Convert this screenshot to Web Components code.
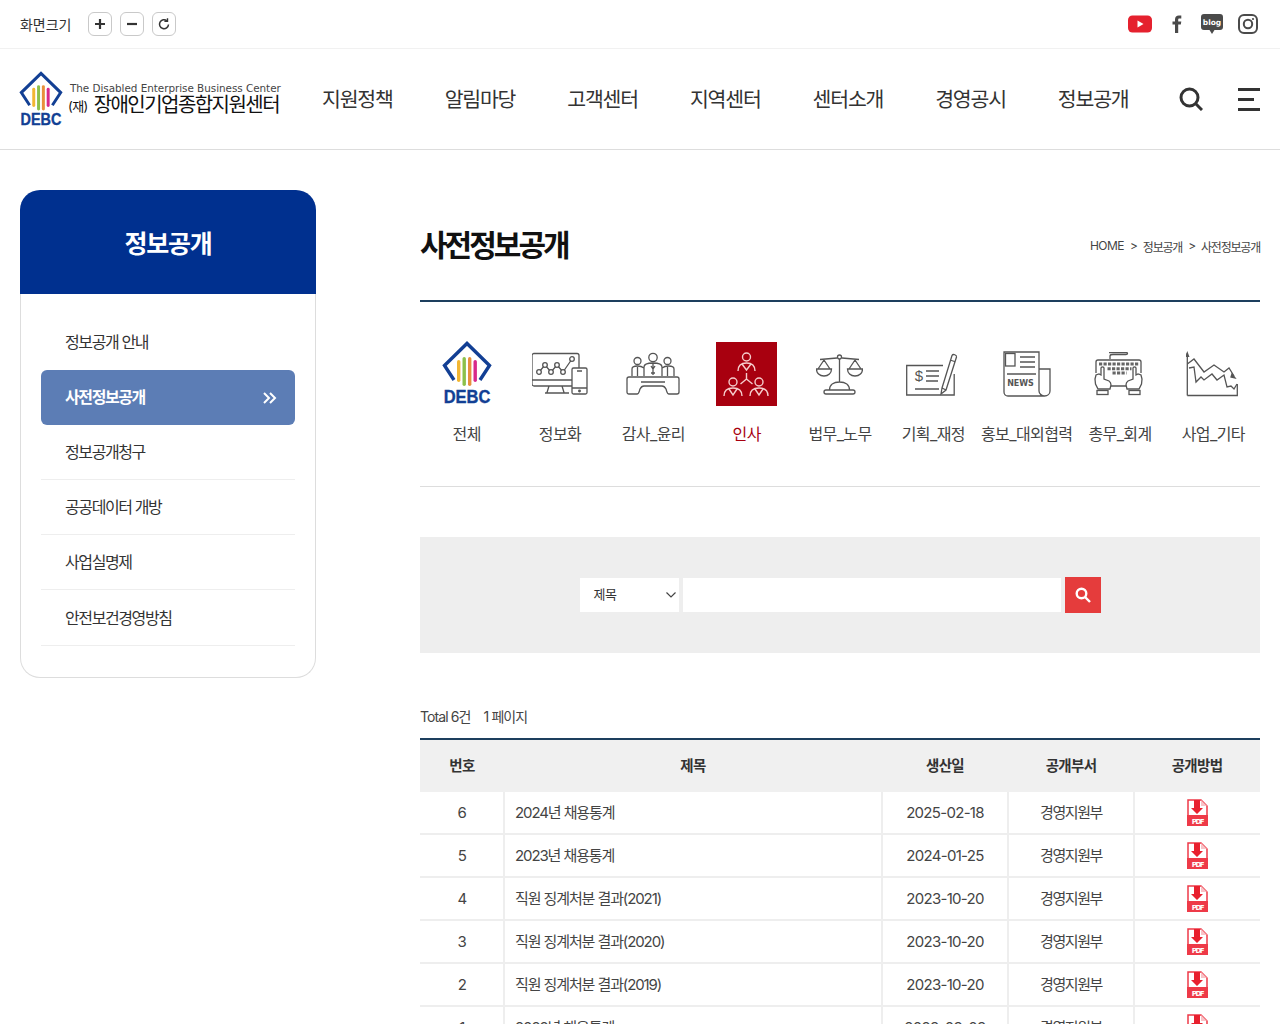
<!DOCTYPE html>
<html lang="ko"><head><meta charset="utf-8"><title>사전정보공개</title>
<style>
html,body{margin:0;padding:0;height:1024px;overflow:hidden;background:#fff}
body{font-family:Inter,"Noto Sans CJK KR","Noto Sans",sans-serif;color:#333}
</style></head><body>
<site-topbar></site-topbar>
<site-header></site-header>
<page-layout>
  <side-nav slot="side"></side-nav>
  <page-title></page-title>
  <cat-tabs></cat-tabs>
  <search-box></search-box>
  <data-board></data-board>
</page-layout>
<script>
const FONT='Inter,"Noto Sans CJK KR","Noto Sans",sans-serif';
const debc=(w)=>`<svg width="${w}" viewBox="0 0 48 64" style="display:block;overflow:visible"><path d="M11 38 1.500 23.500 24 1.500 46.500 23.500 37 38" fill="none" stroke="#123f94" stroke-width="3.400"/><rect x="14" y="18" width="3.400" height="22" rx="1.700" fill="#f2b632"/><rect x="19.500" y="15" width="3.400" height="29" rx="1.700" fill="#8cc04a"/><rect x="25" y="15" width="3.400" height="29" rx="1.700" fill="#e8903c"/><rect x="30.500" y="18" width="3.400" height="22" rx="1.700" fill="#d8298a"/><text transform="translate(24 61) scale(1 1.120)" text-anchor="middle" font-family="Liberation Sans,sans-serif" font-weight="700" font-size="16.500" fill="#123f94" stroke="#123f94" stroke-width=".35">DEBC</text></svg>`;
function def(name,css,html){
  customElements.define(name,class extends HTMLElement{
    constructor(){super();const r=this.attachShadow({mode:'open'});r.innerHTML=`<style>${css}</style>${html}`;}
  });
}
const zoomBtn=(p)=>`<span class="zb"><svg width="14" height="14" viewBox="0 0 14 14" fill="none" stroke="#333" stroke-width="2.200">${p}</svg></span>`;
def('site-topbar',`
:host{display:flex;align-items:center;height:48px;border-bottom:1px solid #f1f1f1;padding:0 20px;font-family:${FONT}}
.l{font-size:14px;color:#333;letter-spacing:-.05px;margin-right:17px}
.zb{width:22px;height:22px;border:1px solid #c9c9c9;border-radius:6px;display:flex;align-items:center;justify-content:center;margin-right:8px}
.sp{flex:1}.s{display:flex;align-items:center}
.s svg{display:block}
`,`<span class="l">화면크기</span>
${zoomBtn('<path d="M7 2v10M2 7h10"/>')}${zoomBtn('<path d="M2 7h10"/>')}
<span class="zb"><svg width="14" height="14" viewBox="0 0 14 14" fill="none" stroke="#333" stroke-width="1.500"><path d="M11.500 7.500a4.500 4.500 0 1 1-1.600-3.700"/><path d="M10.500 1.200v3.100H7.400" stroke-width="1.400"/></svg></span>
<span class="sp"></span>
<span class="s">
<svg width="24" height="18" viewBox="0 0 24 18" style="margin-right:20px"><rect width="24" height="17" y=".5" rx="4.500" fill="#e5212e"/><path d="M9.500 5.500v7l6-3.500z" fill="#fff"/></svg>
<svg width="10" height="18" viewBox="0 0 10 18" style="margin-right:19px"><path d="M3 18V9.500H.5V6.500H3V4.500C3 1.800 4.500.5 6.800.5H9.300V3.500H7.500C6.500 3.500 6.200 4 6.200 4.800V6.500H9.300L8.800 9.500H6.200V18z" fill="#4a4a4a"/></svg>
<svg width="22" height="20" viewBox="0 0 22 20" style="margin-right:15px"><path d="M3 0h16a3 3 0 0 1 3 3v10a3 3 0 0 1-3 3h-5.500L11 20l-2.500-4H3a3 3 0 0 1-3-3V3a3 3 0 0 1 3-3z" fill="#4a4a4a"/><text x="11" y="10.500" text-anchor="middle" font-family="DejaVu Sans,sans-serif" font-size="7.500" font-weight="700" fill="#fff">blog</text></svg>
<svg width="20" height="20" viewBox="0 0 20 20" fill="none" stroke="#4a4a4a" stroke-width="2" style="margin-right:2px"><rect x="1" y="1" width="18" height="18" rx="5"/><circle cx="10" cy="10" r="4.200"/><circle cx="15" cy="5" r="1.100" fill="#4a4a4a" stroke="none"/></svg>
</span>`);
def('site-header',`
:host{display:flex;align-items:center;height:100px;border-bottom:1px solid #ddd;padding:0 0 0 20px;font-family:${FONT}}
.logo{width:262px;position:relative;height:60px;flex:none}
.mark{position:absolute;left:0;top:3px}
.t{position:absolute;left:48px;top:13px;white-space:nowrap}
.t1{font:400 10.400px/13px "DejaVu Sans",sans-serif;color:#444;margin-left:2px;letter-spacing:-.03px}
.t2{font-size:20px;line-height:22px;color:#111;letter-spacing:-1.550px;margin-top:-1px}
.t2 small{font-size:13px;letter-spacing:-.6px;position:relative;top:-1px;margin-right:6px}
nav{display:flex;margin-left:40px;gap:52px;padding-bottom:2px}
nav a{font-size:20.500px;color:#333;letter-spacing:-1.200px;white-space:nowrap}
.sr{margin-left:51px;display:block;flex:none}.mn{margin-left:35px;width:22px;height:23px;display:flex;flex-direction:column;justify-content:space-between;flex:none}
.mn i{display:block;height:3px;background:#333}.mn i:nth-child(2){width:16px}
`,`<div class="logo"><div class="mark">${debc(42)}</div>
<div class="t"><div class="t1">The Disabled Enterprise Business Center</div><div class="t2"><small>(재)</small>장애인기업종합지원센터</div></div></div>
<nav><a>지원정책</a><a>알림마당</a><a>고객센터</a><a>지역센터</a><a>센터소개</a><a>경영공시</a><a>정보공개</a></nav>
<svg class="sr" width="24" height="24" viewBox="0 0 24 24" fill="none" stroke="#333" stroke-width="3"><circle cx="10.500" cy="10.500" r="8.500"/><path d="M16.500 16.500 23 23"/></svg>
<div class="mn"><i></i><i></i><i></i></div>`);
def('page-layout',`
:host{display:flex;padding:40px 20px 0;font-family:${FONT}}
.a{width:296px;flex:none;margin-right:104px}.b{flex:1;min-width:0}
`,`<div class="a"><slot name="side"></slot></div><div class="b"><slot></slot></div>`);
def('side-nav',`
:host{display:block;font-family:${FONT}}
h2{margin:0;height:104px;background:#00308f;border-radius:20px 20px 0 0;color:#fff;font-size:25px;font-weight:700;letter-spacing:-1.200px;display:flex;align-items:center;justify-content:center;padding-bottom:1px;box-sizing:border-box}
ul{list-style:none;margin:0;padding:21px 20px 0;border:1px solid #ddd;border-top:0;border-radius:0 0 20px 20px;height:384px;box-sizing:border-box}
li{height:55px;border-bottom:1.500px solid #eee;display:flex;align-items:center;justify-content:space-between;padding:0 18px 2px 24px;font-size:16px;letter-spacing:-1.400px;color:#333;box-sizing:border-box}
li:last-child{height:56px}
li.n{border-bottom-color:transparent}
li.on{background:#5c7db5;color:#fff;font-weight:700;border-radius:6px;border:0;padding-bottom:3px}
li.on svg{margin-top:3px}
`,`<h2>정보공개</h2><ul>
<li class="n">정보공개 안내</li>
<li class="on">사전정보공개<svg width="14" height="12" viewBox="0 0 14 12" fill="none" stroke="#fff" stroke-width="2"><path d="M1 1l5 5-5 5M7 1l5 5-5 5"/></svg></li>
<li>정보공개청구</li><li>공공데이터 개방</li><li>사업실명제</li><li>안전보건경영방침</li></ul>`);
def('page-title',`
:host{display:flex;justify-content:space-between;align-items:center;height:110px;border-bottom:2px solid #1d3f5e;font-family:${FONT}}
h1{margin:0;font-size:30px;font-weight:700;letter-spacing:-3px;color:#111;position:relative;top:-2px}
.c{font-size:12px;color:#444;letter-spacing:-1.200px;display:flex;gap:6px;position:relative;top:1px}
.c b{font-weight:400;letter-spacing:-.5px}
`,`<h1>사전정보공개</h1><div class="c"><b>HOME</b><span>&gt;</span><span>정보공개</span><span>&gt;</span><span>사전정보공개</span></div>`);
const S='fill="none" stroke="#555" stroke-width="1.300"';
const dot=(x,y)=>`<circle cx="${x}" cy="${y}" r="2.300" fill="#fff"/>`;
const icons={
info:`<svg width="56" height="44" viewBox="0 0 56 44" ${S} style="display:block"><path d="M40 34H2a2 2 0 0 1-2-2V3.500a2 2 0 0 1 2-2h43a2 2 0 0 1 2 2V16M0 28h40M17 34l-2 6.500M30 34l2 6.500M13 41h24"/><rect x="40" y="16" width="15" height="26" rx="1.500"/><path d="M45 19h5M40 36h15"/><circle cx="47.500" cy="39" r=".8" fill="#555"/><path d="M7 20l6-7 6 7 6-7 6 7 9-13"/>${dot(7,20)+dot(13,13)+dot(19,20)+dot(25,13)+dot(31,20)+dot(40,7)}</svg>`,
audit:`<svg width="54" height="44" viewBox="0 0 54 44" ${S} style="display:block"><circle cx="11.500" cy="9" r="3.500"/><circle cx="27" cy="5.500" r="4.200"/><circle cx="41.500" cy="9" r="3.500"/><path d="M6 24v-7c0-2 2-3 5.500-3s4.500.5 6.500 2M48 24v-7c0-2-2-3-5.500-3s-4.500.5-6.500 2M18 24v-9c0-3 4-4 9-4s9 1 9 4v9M11.500 15v9M41.500 15v9M27 11v12M25 14l2 3 2-3M25 21h4"/><path d="M3 25h48c1 0 2 1 2 2v13c0 1-.5 2-2 2h-8c-2 0-2-2-3-5-1-2-2-3-4-3H18c-2 0-3 1-4 3-1 3-1 5-3 5H3c-1.500 0-2-1-2-2V27c0-1 1-2 2-2zM15 30h24" /></svg>`,
hr:`<svg width="61" height="64" viewBox="0 0 61 64" style="background:#a8000f;display:block" fill="none" stroke="#f5cccc" stroke-width="1.400"><circle cx="30.500" cy="15" r="4"/><path d="M22 29c0-5 3-8 8.500-8s8.500 3 8.500 8M26 22l4.500 6 4.500-6M30.500 31v6M30.500 37l-6 5M30.500 37l6 5"/><circle cx="17" cy="40" r="4"/><path d="M8 54c0-5 3-8 9-8s9 3 9 8M13 47l4 6 4-6"/><circle cx="43" cy="40" r="4"/><path d="M34 54c0-5 3-8 9-8s9 3 9 8M39 47l4 6 4-6"/></svg>`,
law:`<svg width="47" height="44" viewBox="0 0 47 44" ${S} style="display:block"><path d="M23.500 7v23M4 7.500l17-1.500M43 7.500l-17-1.500M8 8l-6 9M8 8l6 9M39 8l-6 9M39 8l6 9M.5 17h15c0 4-3 7-7.500 7s-7.500-3-7.500-7zM31.500 17h15c0 4-3 7-7.500 7s-7.500-3-7.500-7zM13.500 38c0-5 4-8 10-8s10 3 10 8"/><circle cx="23.500" cy="5" r="2"/><rect x="8" y="38" width="31" height="4" rx="2"/></svg>`,
money:`<svg width="54" height="44" viewBox="0 0 54 44" ${S} style="display:block"><path d="M37 13.500H.7V43h47.500V22M9 37h24M20 19h13M20 24h13M20 29h12"/><text x="13" y="29" font-size="15" font-family="Liberation Sans,sans-serif" fill="#555" stroke="none" text-anchor="middle">$</text><path d="M36 36l-1 6 5-4L50.500 5c.5-2-3.500-3.500-4.500-1.500zM44 8l4.500 1.500M36 36l4 2"/></svg>`,
news:`<svg width="48" height="46" viewBox="0 0 48 46" ${S} style="display:block"><path d="M1 1h35v39c0 3 3 5 5.500 5H5c-2.500 0-4-2-4-4zM36 18h11v22c0 3-2.500 5-5.500 5M4 23h29M17 6h15M17 11h15M17 16h15"/><rect x="2.500" y="2.500" width="9.500" height="12.500"/><text x="17.500" y="35" font-size="8" font-weight="700" font-family="DejaVu Sans,sans-serif" fill="#555" stroke="none" text-anchor="middle">NEWS</text></svg>`,
kbd:`<svg width="52" height="44" viewBox="0 0 52 44" ${S} style="display:block"><defs><g id="h"><path d="M7 16c0-1.500 3-1.500 3 0v11l5 2c1.500 1 2 2 2 4l-1 4H4l-2.500-5-.5-5 1-4 3-1 2 1z" fill="#fff"/><rect x="3" y="38.500" width="11" height="4"/></g></defs><path d="M16 7V4c0-1.500 1-1.500 3-1.500h13c2 0 2-2 0-2H15M2 21V10c0-1 1-2 2-2h41c1 0 2 1 2 2v11M13 34h23"/><path d="M5 12h40M13.500 16.700h24M18.500 21h14" stroke-width="3" stroke-dasharray="3.200 1.300" stroke="#666"/><use href="#h"/><use href="#h" transform="translate(49 0) scale(-1 1)"/></svg>`,
chart:`<svg width="54" height="46" viewBox="0 0 54 46" ${S} style="display:block"><path d="M1.300 44.500V2M1.300 44.500H51.300V33"/><path d="M1.300 0l2.200 6h-4.400z" fill="#555" stroke="none"/><path d="M1.300 13 8 8l10 13 10-7 10 7 5-4 5 8"/><path d="M46 23l3 4-4-1z" fill="#555"/><path d="M3 17l5-1 2 15 5-5 3 3 8-6 5 6 7-5 3 12 4-1 3 3 3-5"/></svg>`
};
const cats=[[debc(48),'전체'],[icons.info,'정보화'],[icons.audit,'감사_윤리'],[icons.hr,'인사',1],[icons.law,'법무_노무'],[icons.money,'기획_재정'],[icons.news,'홍보_대외협력'],[icons.kbd,'총무_회계'],[icons.chart,'사업_기타']];
def('cat-tabs',`
:host{display:grid;grid-template-columns:repeat(9,1fr);padding:40px 0 0;height:144px;border-bottom:1px solid #ddd;margin-bottom:50px;font-family:${FONT}}
.c{display:flex;flex-direction:column;align-items:center}
.i{height:64px;display:flex;align-items:center;justify-content:center}
.x{margin-top:16px;font-size:16px;letter-spacing:-.6px;color:#444;white-space:nowrap;line-height:24px}
.on .x{color:#a8000f}
`,cats.map(c=>`<div class="c${c[2]?' on':''}"><div class="i">${c[0]}</div><div class="x">${c[1]}</div></div>`).join(''));
def('search-box',`
:host{display:flex;align-items:center;justify-content:center;height:116px;background:#eee;font-family:${FONT};gap:4px}
.s{width:99px;height:34px;background:#fff;display:flex;align-items:center;justify-content:space-between;padding:0 3px 3px 14px;box-sizing:border-box;font-size:13px;color:#333;letter-spacing:-.4px}
.s svg{margin-top:3px}
.i{width:378px;height:34px;background:#fff}
.b{width:36px;height:36px;background:#e53c3c;display:flex;align-items:center;justify-content:center}
`,`<div class="s">제목<svg width="10" height="6" viewBox="0 0 10 6" fill="none" stroke="#444" stroke-width="1.200"><path d="M.5.5l4.500 4.500 4.500-4.500"/></svg></div><div class="i"></div><div class="b"><svg width="16" height="16" viewBox="0 0 16 16" fill="none" stroke="#fff" stroke-width="2.400"><circle cx="6.500" cy="6.500" r="4.800"/><path d="M10 10l5 5"/></svg></div>`);
const pdf=`<svg width="21" height="27" viewBox="0 0 21 27"><path d="M1 1h13l6 6v19H1z" fill="#fff" stroke="#ee3a48" stroke-width="1.500"/><path d="M14 1v6h6z" fill="#f9c3c7"/><path d="M7 1h6v8h3l-6 6-6-6h3z" fill="#e8202e"/><rect y="16" width="21" height="11" fill="#ee3a48"/><text x="10.500" y="24.500" text-anchor="middle" font-family="DejaVu Sans,sans-serif" font-weight="700" font-size="7" fill="#fff">PDF</text></svg>`;
const rows=[[6,'2024년 채용통계','2025-02-18'],[5,'2023년 채용통계','2024-01-25'],[4,'직원 징계처분 결과(2021)','2023-10-20'],[3,'직원 징계처분 결과(2020)','2023-10-20'],[2,'직원 징계처분 결과(2019)','2023-10-20'],[1,'2022년 채용통계','2023-03-03']];
def('data-board',`
:host{display:block;font-family:${FONT};margin-top:51px}
.t{font-size:14px;letter-spacing:-.9px;color:#444;line-height:24px;padding-top:1px;margin-bottom:9px;display:flex;gap:13px}
table{width:840px;border-collapse:collapse;table-layout:fixed;border-top:2px solid #1d3f5e}
th{height:49px;background:#f0f0f0;font-size:14.500px;font-weight:700;color:#333;letter-spacing:-.7px;padding:0 0 3px}
td{height:41px;padding:0;border-bottom:2px solid #eee;border-left:2px solid #eee;text-align:center;font-size:15px;color:#444;letter-spacing:-1.450px;line-height:20px}
td:first-child{border-left:0}
td.l{text-align:left;padding-left:10px;letter-spacing:-1.100px}
td.d{letter-spacing:-.7px}
td svg{display:block;margin:0 auto}
`,`<div class="t"><span>Total 6건</span><span>1 페이지</span></div><table><colgroup><col style="width:84px"><col style="width:378px"><col style="width:126px"><col style="width:126px"><col style="width:126px"></colgroup><thead><tr><th>번호</th><th>제목</th><th>생산일</th><th>공개부서</th><th>공개방법</th></tr></thead><tbody>${rows.map(r=>`<tr><td>${r[0]}</td><td class="l">${r[1]}</td><td class="d">${r[2]}</td><td>경영지원부</td><td>${pdf}</td></tr>`).join('')}</tbody></table>`);
</script>
</body></html>
